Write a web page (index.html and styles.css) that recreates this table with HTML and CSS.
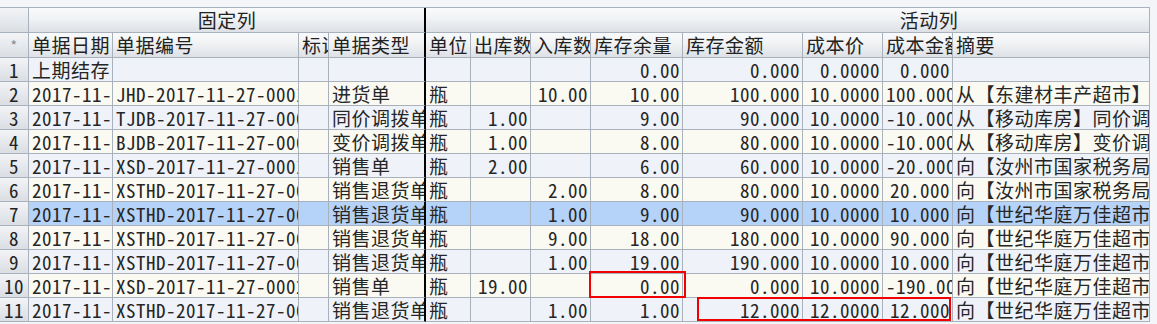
FILE: index.html
```html
<!DOCTYPE html>
<html lang="zh-CN">
<head>
<meta charset="utf-8">
<title>库存明细</title>
<link rel="stylesheet" href="styles.css">
</head>
<body>
<div class="page">
  <table class="grid">
    <colgroup>
      <col class="c-rh"><col class="c-date"><col class="c-no"><col class="c-flag"><col class="c-type">
      <col class="c-unit"><col class="c-out"><col class="c-in"><col class="c-qty"><col class="c-amt">
      <col class="c-price"><col class="c-cost"><col class="c-memo">
    </colgroup>
    <thead>
      <tr class="grp">
        <th class="rh"></th>
        <th class="fixed-end center" colspan="4">固定列</th>
        <th class="active" colspan="8">活动列</th>
      </tr>
      <tr class="hdr">
        <th class="rh star">*</th>
        <th>单据日期</th>
        <th>单据编号</th>
        <th>标识</th>
        <th class="fixed-end">单据类型</th>
        <th>单位</th>
        <th>出库数</th>
        <th>入库数</th>
        <th>库存余量</th>
        <th>库存金额</th>
        <th>成本价</th>
        <th>成本金额</th>
        <th>摘要</th>
      </tr>
    </thead>
    <tbody>
      <tr class="odd">
        <td class="rh">1</td><td>上期结存</td><td></td><td></td><td class="fixed-end"></td>
        <td></td><td class="n"></td><td class="n"></td><td class="n">0.00</td><td class="n">0.000</td><td class="n">0.0000</td><td class="n">0.000</td><td></td>
      </tr>
      <tr class="even">
        <td class="rh">2</td><td>2017-11-27</td><td>JHD-2017-11-27-0001</td><td></td><td class="fixed-end">进货单</td>
        <td>瓶</td><td class="n"></td><td class="n">10.00</td><td class="n">10.00</td><td class="n">100.000</td><td class="n">10.0000</td><td class="n">100.000</td><td>从【东建材丰产超市】进货</td>
      </tr>
      <tr class="odd">
        <td class="rh">3</td><td>2017-11-27</td><td>TJDB-2017-11-27-0001</td><td></td><td class="fixed-end">同价调拨单</td>
        <td>瓶</td><td class="n">1.00</td><td class="n"></td><td class="n">9.00</td><td class="n">90.000</td><td class="n">10.0000</td><td class="n">-10.000</td><td>从【移动库房】同价调拨</td>
      </tr>
      <tr class="even">
        <td class="rh">4</td><td>2017-11-27</td><td>BJDB-2017-11-27-0001</td><td></td><td class="fixed-end">变价调拨单</td>
        <td>瓶</td><td class="n">1.00</td><td class="n"></td><td class="n">8.00</td><td class="n">80.000</td><td class="n">10.0000</td><td class="n">-10.000</td><td>从【移动库房】变价调拨</td>
      </tr>
      <tr class="odd">
        <td class="rh">5</td><td>2017-11-27</td><td>XSD-2017-11-27-0001</td><td></td><td class="fixed-end">销售单</td>
        <td>瓶</td><td class="n">2.00</td><td class="n"></td><td class="n">6.00</td><td class="n">60.000</td><td class="n">10.0000</td><td class="n">-20.000</td><td>向【汝州市国家税务局】</td>
      </tr>
      <tr class="even">
        <td class="rh">6</td><td>2017-11-27</td><td>XSTHD-2017-11-27-0001</td><td></td><td class="fixed-end">销售退货单</td>
        <td>瓶</td><td class="n"></td><td class="n">2.00</td><td class="n">8.00</td><td class="n">80.000</td><td class="n">10.0000</td><td class="n">20.000</td><td>向【汝州市国家税务局】</td>
      </tr>
      <tr class="sel">
        <td class="rh">7</td><td>2017-11-27</td><td>XSTHD-2017-11-27-0002</td><td></td><td class="fixed-end">销售退货单</td>
        <td>瓶</td><td class="n"></td><td class="n">1.00</td><td class="n">9.00</td><td class="n">90.000</td><td class="n">10.0000</td><td class="n">10.000</td><td>向【世纪华庭万佳超市】</td>
      </tr>
      <tr class="even">
        <td class="rh">8</td><td>2017-11-27</td><td>XSTHD-2017-11-27-0003</td><td></td><td class="fixed-end">销售退货单</td>
        <td>瓶</td><td class="n"></td><td class="n">9.00</td><td class="n">18.00</td><td class="n">180.000</td><td class="n">10.0000</td><td class="n">90.000</td><td>向【世纪华庭万佳超市】</td>
      </tr>
      <tr class="odd">
        <td class="rh">9</td><td>2017-11-27</td><td>XSTHD-2017-11-27-0004</td><td></td><td class="fixed-end">销售退货单</td>
        <td>瓶</td><td class="n"></td><td class="n">1.00</td><td class="n">19.00</td><td class="n">190.000</td><td class="n">10.0000</td><td class="n">10.000</td><td>向【世纪华庭万佳超市】</td>
      </tr>
      <tr class="even">
        <td class="rh">10</td><td>2017-11-27</td><td>XSD-2017-11-27-0002</td><td></td><td class="fixed-end">销售单</td>
        <td>瓶</td><td class="n">19.00</td><td class="n"></td><td class="n">0.00</td><td class="n">0.000</td><td class="n">10.0000</td><td class="n">-190.000</td><td>向【世纪华庭万佳超市】</td>
      </tr>
      <tr class="odd">
        <td class="rh">11</td><td>2017-11-27</td><td>XSTHD-2017-11-27-0005</td><td></td><td class="fixed-end">销售退货单</td>
        <td>瓶</td><td class="n"></td><td class="n">1.00</td><td class="n">1.00</td><td class="n">12.000</td><td class="n">12.0000</td><td class="n">12.000</td><td>向【世纪华庭万佳超市】</td>
      </tr>
    </tbody>
  </table>
  <div class="mark mark-qty"></div>
  <div class="mark mark-cost"></div>
</div>
</body>
</html>
```

FILE: styles.css
```css
html, body {
  margin: 0;
  padding: 0;
  background: #f3f5f8;
}

.page {
  position: relative;
  width: 1157px;
  height: 324px;
  padding-top: 7px;
  box-sizing: border-box;
  background: #f3f5f8;
  overflow: hidden;
}

.grid {
  width: 1150px;
  table-layout: fixed;
  border-collapse: separate;
  border-spacing: 0;
  border-top: 1px solid #a9b1bd;
  font-family: "Noto Sans Mono CJK SC", "Noto Sans CJK SC", "DejaVu Sans Mono", monospace;
  font-size: 19px;
  letter-spacing: 0.5px;
  color: #262626;
}

.c-rh { width: 29px; }
.c-date { width: 84px; }
.c-no { width: 186px; }
.c-flag { width: 30px; }
.c-type { width: 97px; }
.c-unit { width: 45px; }
.c-out { width: 60px; }
.c-in { width: 60px; }
.c-qty { width: 92px; }
.c-amt { width: 120px; }
.c-price { width: 80px; }
.c-cost { width: 70px; }
.c-memo { width: 197px; }

.grid th,
.grid td {
  padding: 0 2px 0 3px;
  border-right: 1px solid #a9b1bd;
  border-bottom: 1px solid #a9b1bd;
  white-space: nowrap;
  overflow: hidden;
  text-overflow: clip;
  font-weight: normal;
  text-align: left;
  vertical-align: middle;
}

.grid th {
  height: 24px;
  line-height: 24px;
  background: linear-gradient(#f9fafb, #f0f2f4 45%, #dde1e6);
  color: #222;
}

.grid td {
  height: 23px;
  line-height: 23px;
}

.grid .center { text-align: center; }

.grid .active {
  text-align: center;
  padding-left: 285px;
}

.grid .fixed-end {
  border-right: 2px solid #000;
}

.grid .rh {
  padding: 0;
  text-align: center;
  background: linear-gradient(#f3f4f6, #e6e9ed 50%, #dadee3);
  color: #222;
}

.grid .star {
  font-size: 14px;
  color: #8a8a8a;
}

.grid td.n {
  text-align: right;
}

.odd td { background: #eff3f9; }
.even td { background: #fbfaf2; }
.sel td { background: #b5d2f8; }

.mark {
  position: absolute;
  border: 2px solid #f20000;
  box-sizing: border-box;
}

.mark-qty {
  left: 589px;
  top: 271px;
  width: 97px;
  height: 27px;
}

.mark-cost {
  left: 697px;
  top: 297px;
  width: 254px;
  height: 24px;
}
```
